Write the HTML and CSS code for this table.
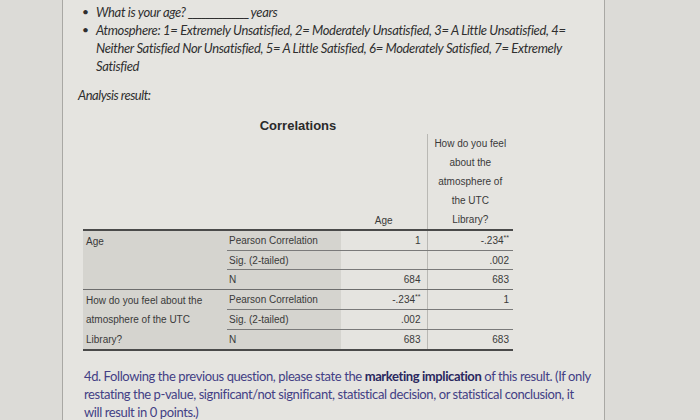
FILE: index.html
```html
<!DOCTYPE html>
<html>
<head>
<meta charset="utf-8">
<link rel="stylesheet" href="styles.css">
</head>
<body>
<div class="page">
  <ul class="bullets">
    <li><span class="dot">•</span><span class="btext">What is your age? <span class="blank">______________</span> years</span></li>
    <li><span class="dot">•</span><span class="btext">Atmosphere: 1= Extremely Unsatisfied, 2= Moderately Unsatisfied, 3= A Little Unsatisfied, 4=<br>Neither Satisfied Nor Unsatisfied, 5= A Little Satisfied, 6= Moderately Satisfied, 7= Extremely<br>Satisfied</span></li>
  </ul>
  <p class="analysis">Analysis result:</p>

  <table class="corr">
    <caption>Correlations</caption>
    <colgroup>
      <col class="c1">
      <col class="c2">
      <col class="c3">
      <col class="c4">
    </colgroup>
    <thead>
      <tr>
        <th class="blankhead" colspan="2"></th>
        <th class="colhead age">Age</th>
        <th class="colhead feel">How do you feel<br>about the<br>atmosphere of<br>the UTC<br>Library?</th>
      </tr>
    </thead>
    <tbody>
      <tr>
        <td class="rowlab grp-end" rowspan="3">Age</td>
        <td class="stat">Pearson Correlation</td>
        <td class="num">1</td>
        <td class="num last">-.234<sup>**</sup></td>
      </tr>
      <tr>
        <td class="stat">Sig. (2-tailed)</td>
        <td class="num"></td>
        <td class="num last">.002</td>
      </tr>
      <tr class="gend">
        <td class="stat">N</td>
        <td class="num">684</td>
        <td class="num last">683</td>
      </tr>
      <tr>
        <td class="rowlab bottom" rowspan="3">How do you feel about the<br>atmosphere of the UTC<br>Library?</td>
        <td class="stat">Pearson Correlation</td>
        <td class="num">-.234<sup>**</sup></td>
        <td class="num last">1</td>
      </tr>
      <tr>
        <td class="stat">Sig. (2-tailed)</td>
        <td class="num">.002</td>
        <td class="num last"></td>
      </tr>
      <tr class="tend">
        <td class="stat">N</td>
        <td class="num">683</td>
        <td class="num last">683</td>
      </tr>
    </tbody>
  </table>

  <p class="question">4d. Following the previous question, please state the <b>marketing implication</b> of this result. (If only<br>restating the p-value, significant/not significant, statistical decision, or statistical conclusion, it<br>will result in 0 points.)</p>
</div>
</body>
</html>
```

FILE: styles.css
```css
html, body {
  margin: 0;
  padding: 0;
  background: #dcdbd7;
}
body {
  width: 700px;
  height: 420px;
  overflow: hidden;
}
.page {
  margin-left: 62px;
  width: 541px;
  height: 420px;
  background: #e5e4e0;
  border-left: 1px solid #a9a8a4;
  border-right: 1px solid #a9a8a4;
  padding-top: 3px;
}
.bullets {
  list-style: none;
  margin: 0;
  padding: 0 0 0 19px;
  font-family: Lato, "Open Sans", sans-serif;
  font-style: italic;
  font-size: 13px;
  letter-spacing: -0.35px;
  line-height: 18px;
  color: #2f2f2f;
}
.bullets li {
  display: flex;
}
.dot {
  width: 14px;
  flex: none;
  font-style: normal;
  font-size: 12px;
}
.btext {
  display: block;
}
.blank {
  letter-spacing: -1.5px;
}
.analysis {
  margin: 11px 0 0 15px;
  font-family: Lato, "Open Sans", sans-serif;
  font-style: italic;
  font-size: 13px;
  letter-spacing: -0.5px;
  line-height: 18px;
  color: #2f2f2f;
}
.corr {
  margin: 14px 0 0 20px;
  border-collapse: collapse;
  font-family: "Liberation Sans", Arial, sans-serif;
  font-size: 10px;
  color: #3a3a3a;
  table-layout: fixed;
  width: 430px;
}
.c1 { width: 144px; }
.c2 { width: 114px; }
.c3 { width: 86px; }
.c4 { width: 86px; }
.corr caption {
  font-weight: bold;
  font-size: 13px;
  line-height: 16px;
  color: #2a2a2a;
}
.corr th, .corr td {
  padding: 0;
  font-weight: normal;
}
.blankhead {
  border-bottom: 2px solid #4a4a4a;
}
.colhead {
  border-bottom: 2px solid #4a4a4a;
  vertical-align: bottom;
  text-align: center;
  line-height: 19px;
}
.age {
  line-height: 16px;
}
.feel {
  border-left: 1px solid #b9b8b4;
}
.corr td {
  height: 16.5px;
  line-height: 16.5px;
  padding-top: 2px;
  vertical-align: middle;
}
.corr td.rowlab {
  background: #d5d4cf;
  vertical-align: top;
  padding-left: 3px;
  padding-top: 1px;
  line-height: 19.6px;
  white-space: nowrap;
}
.rowlab.grp-end {
  border-bottom: 1px solid #6d6d6d;
}
.rowlab.bottom {
  border-bottom: 2px solid #4a4a4a;
}
.corr td.stat {
  background: #d5d4cf;
  padding-left: 2px;
  border-bottom: 1px solid #7a7a7a;
}
.corr td.num {
  text-align: right;
  padding-right: 6px;
  border-bottom: 1px solid #7a7a7a;
}
.corr td.num.last {
  border-left: 1px solid #b9b8b4;
  padding-right: 4px;
}
.corr .gend td {
  border-bottom: 1px solid #6d6d6d;
}
.corr .tend td {
  border-bottom: 2px solid #4a4a4a;
}
sup {
  font-size: 7px;
  line-height: 0;
  vertical-align: 4px;
}
.question {
  margin: 16px 0 0 21px;
  width: 520px;
  white-space: nowrap;
  font-family: Lato, "Open Sans", sans-serif;
  font-size: 13px;
  letter-spacing: -0.4px;
  line-height: 18px;
  color: #433f85;
}
.question b {
  color: #2a285f;
}
```
